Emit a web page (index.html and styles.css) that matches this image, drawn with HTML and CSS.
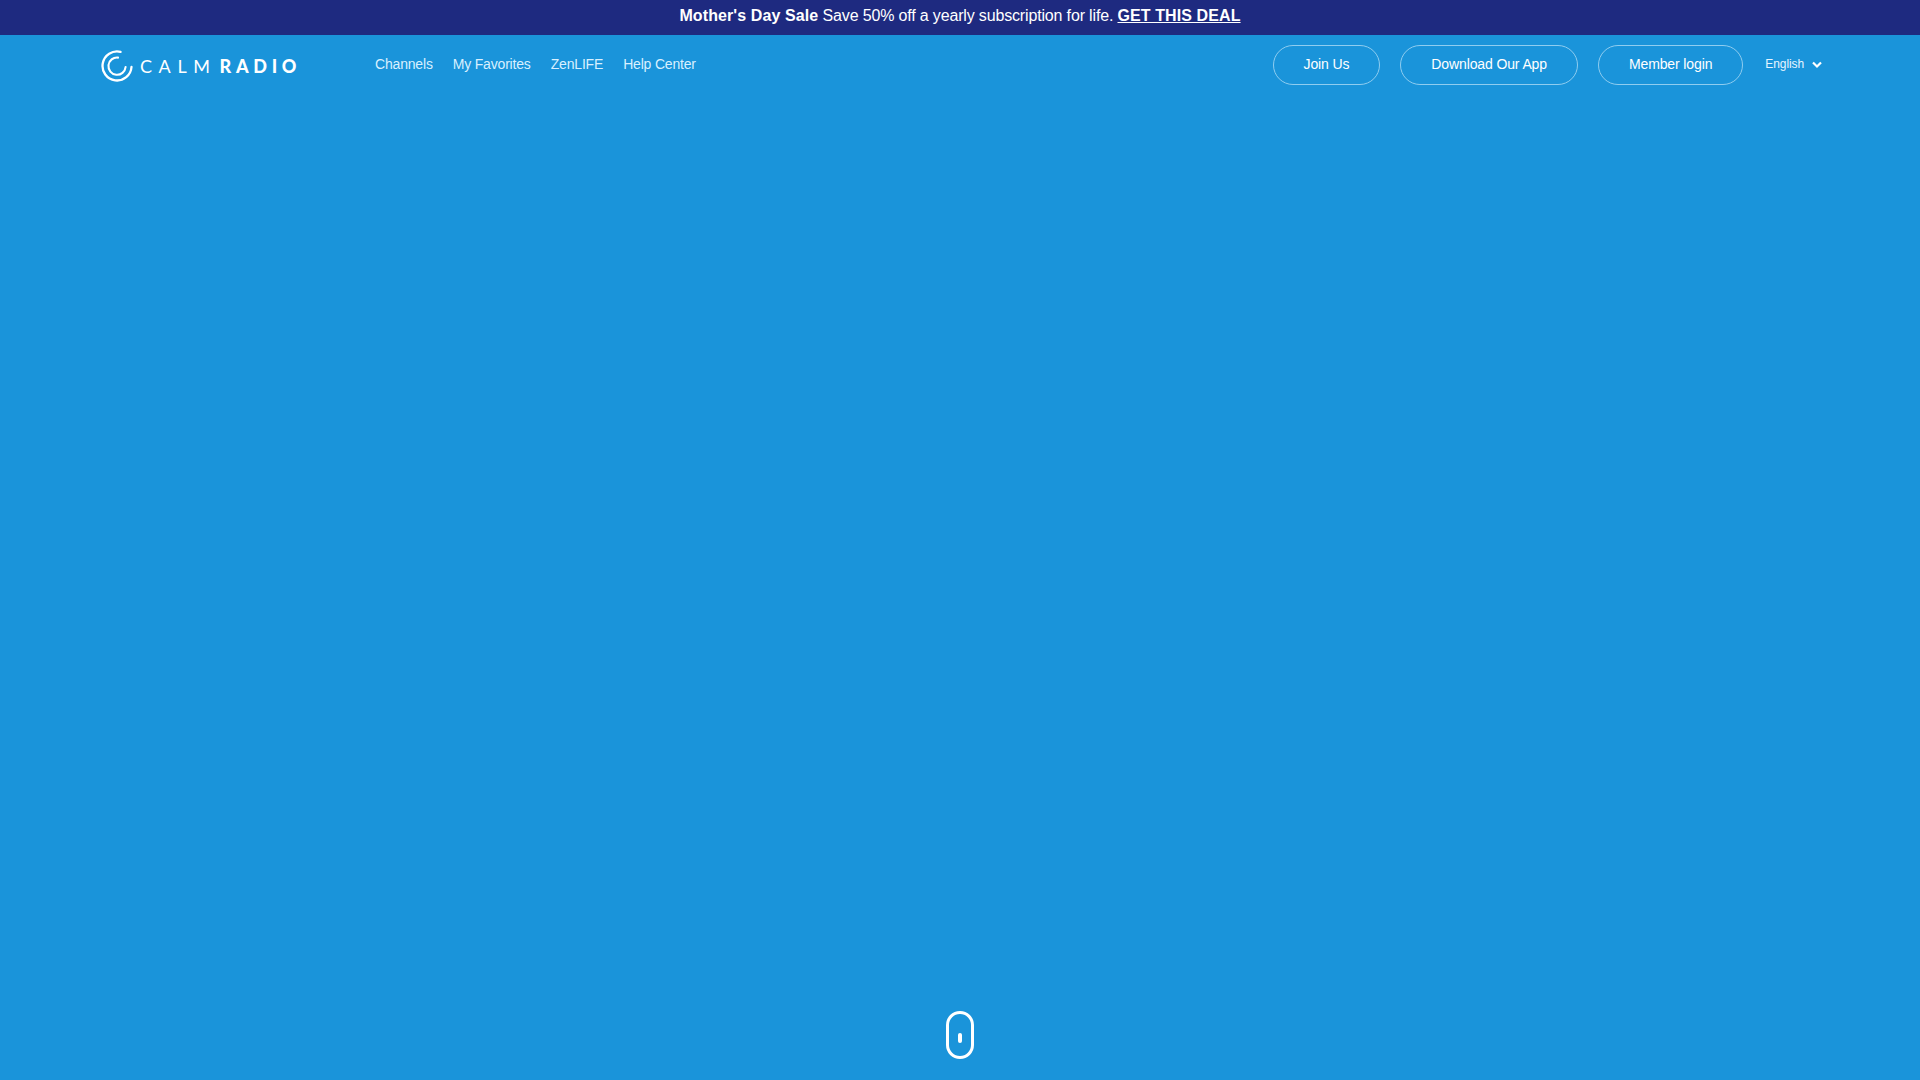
FILE: index.html
```html
<!DOCTYPE html>
<html lang="en">
<head>
    <meta charset="UTF-8">
    <title>Calm Radio</title>
    <link rel="stylesheet" href="styles.css">
</head>
<body>
    <div class="promo">
        <b>Mother's Day Sale</b> Save 50% off a yearly subscription for life. <a href="#">GET THIS DEAL</a>
    </div>
    <div class="hero">
        <header class="topbar">
            <a class="logo" href="#">
                <svg class="logo_mark" width="32" height="32" viewBox="0 0 32 32" fill="none" stroke="#fff" stroke-linecap="round">
                    <path d="M19.5 1.9A14.5 14.5 0 1 0 30.5 17" stroke-width="2.3"/>
                    <path d="M17 7.6A8.6 8.6 0 1 0 24.6 17" stroke-width="2.1"/>
                </svg>
                <span class="logo_text">CALM<b>RADIO</b></span>
            </a>
            <nav class="mainnav">
                <a href="#">Channels</a>
                <a href="#">My Favorites</a>
                <a href="#">ZenLIFE</a>
                <a href="#">Help Center</a>
            </nav>
            <div class="actions">
                <a class="pill" href="#">Join Us</a>
                <a class="pill" href="#">Download Our App</a>
                <a class="pill" href="#">Member login</a>
            </div>
            <div class="lang">
                English
                <svg width="10" height="8" viewBox="0 0 10 8" fill="none" stroke="#fff" stroke-width="2.2"><path d="M1 1.5l4 4 4-4"/></svg>
            </div>
        </header>
        <div class="scroll_hint">
            <svg width="28" height="48" viewBox="0 0 28 48" fill="none" stroke="#fff">
                <rect x="1.5" y="1.5" width="25" height="45" rx="12.5" stroke-width="3"/>
                <path d="M14 24v6" stroke-width="4" stroke-linecap="round"/>
            </svg>
        </div>
    </div>
</body>
</html>
```

FILE: styles.css
```css
* {
    box-sizing: border-box;
}

body {
    margin: 0;
    height: 1080px;
    overflow: hidden;
    font-family: "Liberation Sans", Arial, sans-serif;
    color: #fff;
    display: flex;
    flex-direction: column;
}

a {
    color: inherit;
    text-decoration: none;
}

.promo {
    height: 35px;
    line-height: 32px;
    background-color: #1e2a80;
    font-size: 16px;
    letter-spacing: -0.16px;
    text-align: center;
}

.promo b,
.promo a {
    letter-spacing: 0.1px;
}

.promo a {
    font-weight: bold;
    text-decoration: underline;
}

.hero {
    flex: 1;
    background-color: #1a94da;
    display: flex;
    flex-direction: column;
    justify-content: space-between;
}

.topbar {
    display: flex;
    align-items: center;
    height: 40px;
    margin-top: 10px;
    padding: 0 98px 0 101px;
}

.logo {
    display: flex;
    align-items: center;
    width: 274px;
    padding-top: 2px;
}

.logo_text {
    margin-left: 7px;
    font-family: Lato, sans-serif;
    font-size: 18px;
    letter-spacing: 6.6px;
}

.logo_text b {
    margin-left: 3px;
    font-weight: 900;
    letter-spacing: 4.7px;
}

.mainnav {
    display: flex;
    gap: 20px;
    margin-bottom: 2px;
    font-size: 14px;
    letter-spacing: -0.18px;
    color: #d8f0ff;
}

.actions {
    display: flex;
    gap: 20px;
    margin-left: auto;
}

.pill {
    height: 40px;
    padding: 0 30px;
    line-height: 37px;
    font-size: 14px;
    letter-spacing: -0.12px;
    border: 1px solid #8fcdf0;
    border-radius: 20px;
}

.lang {
    display: flex;
    align-items: center;
    gap: 8px;
    margin-left: 22px;
    padding-bottom: 3px;
    font-size: 12px;
    letter-spacing: -0.1px;
    color: #e6f5ff;
}

.lang svg {
    margin-top: 3px;
}

.scroll_hint {
    display: flex;
    justify-content: center;
    padding-bottom: 21px;
}
```
